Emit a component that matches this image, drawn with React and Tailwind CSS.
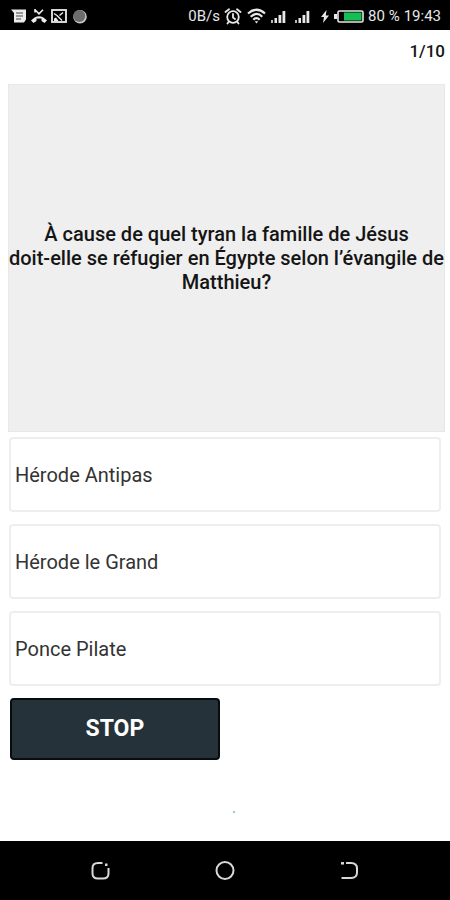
import React, { useState } from 'react';

const question = {
  lines: [
    'À cause de quel tyran la famille de Jésus',
    'doit-elle se réfugier en Égypte selon l’évangile de',
    'Matthieu?',
  ],
  answers: ['Hérode Antipas', 'Hérode le Grand', 'Ponce Pilate'],
};

function SignalIcon() {
  return (
    <svg width="15" height="15" viewBox="0 0 15 15" fill="#e8e8e8">
      <rect x="0" y="11" width="2" height="3" opacity="0.8" />
      <rect x="3.500" y="9" width="2.500" height="5" />
      <rect x="7.500" y="6" width="2.800" height="8" />
      <rect x="11.500" y="2" width="2.800" height="12" />
    </svg>
  );
}

function StatusBar() {
  return (
    <header className="flex h-[30px] items-center justify-between bg-black pt-[2px] pr-[9px] pl-[11px] text-[#e8e8e8]">
      <div className="flex items-center gap-1">
        <svg width="16" height="14" viewBox="0 0 16 14" fill="#ececec">
          <path d="M0 0.500h15v10l-2 3H3V4z" />
          <path d="M5 4h7M5 7h7M5 10h5" stroke="#444" strokeWidth="1" />
        </svg>
        <svg width="16" height="14" viewBox="0 0 16 14" fill="none" stroke="#ececec">
          <path d="M4 0.800l4 4L12 0.800M4 0v3.500" strokeWidth="1.6" />
          <path d="M0 11.500Q8 3 16 11.500L13.500 14L10.500 12V9.500H5.500V12L2.500 14Z" fill="#ececec" stroke="none" />
        </svg>
        <svg width="16" height="14" viewBox="0 0 16 14" fill="none" stroke="#ececec">
          <rect x="1" y="1" width="14" height="12" strokeWidth="1.8" />
          <path d="M3 4.500L6 6.500L8.500 9L11 11.500M8.500 6.500L12 3.500" strokeWidth="1.4" />
          <path d="M3 12V9.500L5 8.500L7.500 12z" fill="#ececec" stroke="none" />
        </svg>
        <svg className="ml-[2px]" width="15" height="15" viewBox="0 0 15 15">
          <circle cx="7" cy="7.800" r="6.800" fill="#c8c8c8" />
          <circle cx="6.300" cy="7" r="6" fill="#6c6c6c" />
        </svg>
      </div>

      <div className="flex items-center text-[15px] leading-5">
        <span>0B/s</span>
        <svg className="ml-1" width="18" height="17" viewBox="0 0 18 17" fill="none" stroke="#e8e8e8" strokeWidth="1.8" strokeLinecap="round">
          <circle cx="9" cy="9" r="5.800" />
          <path d="M9 6v3.500l2 1.500M1.500 4L5 1.200M16.500 4L13 1.200M4.500 14L3.500 15.500M13.500 14L14.500 15.500" />
        </svg>
        <svg className="ml-[5px]" width="19" height="16" viewBox="0 0 19 16" fill="none" stroke="#e8e8e8" strokeWidth="2.2">
          <path d="M1 5.500Q9.500-2 18 5.500M3.700 8.700Q9.500 3.200 15.300 8.700M6.300 11.800Q9.500 8.500 12.700 11.800" />
          <path d="M7.700 13.200h3.600L9.500 15.500z" fill="#e8e8e8" stroke="none" />
        </svg>
        <div className="ml-[5px] flex gap-[9px]">
          <SignalIcon />
          <SignalIcon />
        </div>
        <svg className="ml-[11px]" width="8" height="13" viewBox="0 0 8 13" fill="#e8e8e8">
          <path d="M5.500 0L0 7h3L2 13l6-7.500H4.800z" />
        </svg>
        <svg className="ml-[5px]" width="30" height="13" viewBox="0 0 30 13">
          <rect x="0" y="4" width="3" height="5" fill="#e8e8e8" />
          <rect x="4" y="1" width="25" height="11" rx="1.500" fill="none" stroke="#e8e8e8" strokeWidth="1.6" />
          <rect x="10" y="2.500" width="17.500" height="8" fill="#16bf55" />
        </svg>
        <span className="ml-1">80 %</span>
        <time className="ml-1">19:43</time>
      </div>
    </header>
  );
}

function NavBar() {
  return (
    <nav className="flex h-[59px] items-center justify-center gap-[104px] bg-black">
      <button type="button" aria-label="Applications">
        <svg width="20" height="20" viewBox="0 0 20 20" fill="none" stroke="#d8d8d8" strokeWidth="2">
          <path d="M11.500 2H7Q1.500 2 1.500 7v5.500Q1.500 17.500 7 17.500h5q5.500 0 5.500-5V7" />
          <rect x="14" y="2.500" width="2.500" height="2.500" fill="#d8d8d8" stroke="none" />
        </svg>
      </button>
      <button type="button" aria-label="Accueil">
        <svg width="20" height="20" viewBox="0 0 20 20" fill="none" stroke="#d8d8d8" strokeWidth="2">
          <circle cx="10" cy="9.500" r="8.500" />
        </svg>
      </button>
      <button type="button" aria-label="Retour">
        <svg width="20" height="20" viewBox="0 0 20 20" fill="none" stroke="#d8d8d8" strokeWidth="2">
          <path d="M7 2h5q6 0 6 5.500v4q0 5.500-6 5.500H2.500" />
          <path d="M2 2.300h3" strokeWidth="2.500" />
        </svg>
      </button>
    </nav>
  );
}

function App() {
  const [selected, setSelected] = useState(null);

  return (
    <div className="flex min-h-screen flex-col bg-white font-['Roboto',sans-serif]">
      <StatusBar />

      <main className="flex flex-1 flex-col pt-[9px] pr-[5px] pb-7 pl-2">
        <p className="self-end text-[17px] leading-6 font-medium text-[#151515]">1/10</p>

        <section className="mt-[21px] flex h-[348px] items-center bg-[#efefef] inset-ring inset-ring-[#e8e8e8]">
          <h1 className="w-full text-center text-[20px] leading-6 font-medium text-[#151515]">
            {question.lines.map((line) => (
              <span key={line} className="block">{line}</span>
            ))}
          </h1>
        </section>

        <div className="mt-[5px] mr-1 ml-px flex flex-col gap-3">
          {question.answers.map((answer) => (
            <button
              key={answer}
              type="button"
              aria-pressed={selected === answer}
              onClick={() => setSelected(answer)}
              className="h-[75px] rounded-[4px] border-2 border-[#eeeeee] bg-white px-1 text-left text-[20px] leading-6 font-normal text-[#333333]"
            >
              {answer}
            </button>
          ))}
        </div>

        <button
          type="button"
          onClick={() => setSelected(null)}
          className="mt-3 ml-[2px] h-[62px] w-[48%] rounded-[4px] border-2 border-[#080c0e] bg-[#263239] text-[23px] leading-7 font-bold text-white"
        >
          STOP
        </button>

        <div className="mt-auto ml-[225px] size-[2px] rounded-full bg-[#6cc5b0]" />
      </main>

      <NavBar />
    </div>
  );
}

export default App;
